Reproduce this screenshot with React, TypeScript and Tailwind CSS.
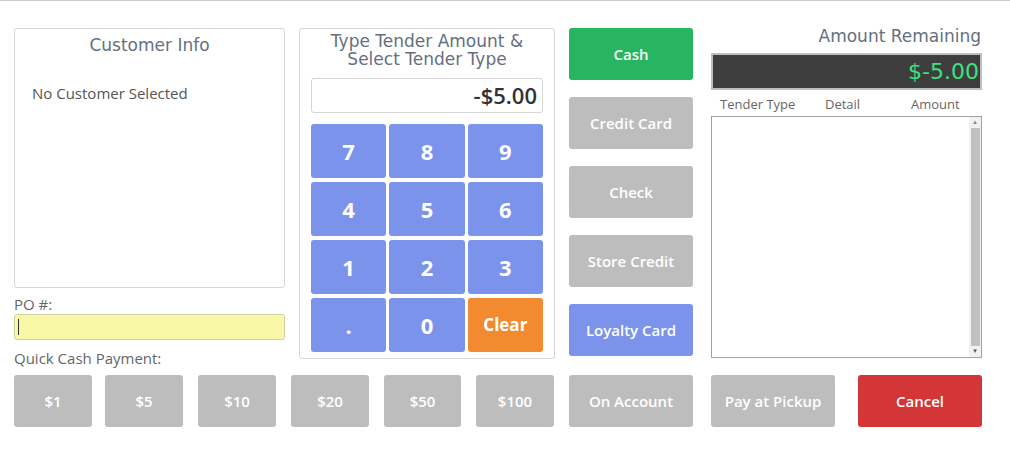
import React from 'react';

const title = { fontFamily: '"DejaVu Sans", "Noto Sans", sans-serif' };
const body = { fontFamily: '"Open Sans", "Noto Sans", sans-serif' };

const keys = ['7', '8', '9', '4', '5', '6', '1', '2', '3', '.', '0'];

const Btn: React.FC<{ label: string; className: string }> = ({ label, className }) => (
  <button
    className={`h-[52px] rounded-[3px] text-white font-semibold text-[15px] flex items-center justify-center ${className}`}
    style={body}
  >
    {label}
  </button>
);

export default function App() {
  return (
    <div className="w-[1010px] h-[452px] bg-white border-t border-[#c8c8c8] overflow-hidden" style={body}>
      <div className="flex items-start pt-[27px] pl-[14px]">
        {/* left column */}
        <div className="w-[271px] flex flex-col">
          <div className="h-[260px] border border-[#d6d6d6] rounded-[3px] flex flex-col">
            <div className="text-center text-[17px] text-[#647080] pt-[6px] leading-[20px]" style={title}>
              Customer Info
            </div>
            <div className="pl-[17px] pt-[28px] text-[15px] text-[#555] leading-[20px]">No Customer Selected</div>
          </div>
          <div className="pt-[6px] leading-[20px] text-[15px] text-[#666]">PO #:</div>
          <div className="h-[26px] bg-[#f9f8a9] border border-[#d2d2a0] rounded-[3px] flex items-center pl-[3px]">
            <div className="w-px h-[16px] bg-[#333]" />
          </div>
          <div className="pt-[8px] leading-[20px] text-[15px] text-[#666]">Quick Cash Payment:</div>
        </div>

        {/* tender amount panel */}
        <div className="w-[256px] h-[331px] ml-[14px] border border-[#d6d6d6] rounded-[3px] px-[11px] pt-[3px] flex flex-col">
          <div className="text-center text-[17px] leading-[18px] text-[#647080]" style={title}>
            <div>Type Tender Amount &amp;</div>
            <div>Select Tender Type</div>
          </div>
          <div className="mt-[10px] h-[35px] border border-[#d6d6d6] rounded-[3px] flex items-center justify-end pr-[5px] text-[22px] font-semibold text-[#333]">
            -$5.00
          </div>
          <div className="mt-[11px] grid grid-cols-3 gap-x-[3px] gap-y-[4px]">
            {keys.map((k) => (
              <button
                key={k}
                className="h-[54px] rounded-[3px] bg-[#7b93ea] text-white text-[22px] font-bold flex items-center justify-center"
              >
                {k}
              </button>
            ))}
            <button className="h-[54px] rounded-[3px] bg-[#f28a30] text-white text-[17px] font-bold flex items-center justify-center">
              Clear
            </button>
          </div>
        </div>

        {/* tender types */}
        <div className="w-[124px] ml-[14px] flex flex-col gap-[17px]">
          <Btn label="Cash" className="bg-[#27b561]" />
          <Btn label="Credit Card" className="bg-[#bdbdbd]" />
          <Btn label="Check" className="bg-[#bdbdbd]" />
          <Btn label="Store Credit" className="bg-[#bdbdbd]" />
          <Btn label="Loyalty Card" className="bg-[#7b93ea]" />
        </div>

        {/* amount remaining */}
        <div className="w-[271px] ml-[18px] flex flex-col">
          <div className="text-right text-[17px] leading-[16px] text-[#647080] pr-[1px]" style={title}>
            Amount Remaining
          </div>
          <div
            className="mt-[9px] h-[37px] bg-[#3e3e3e] border-2 border-[#bdbdbd] flex items-center justify-end pr-[1px] text-[22px] text-[#3fe07f]"
            style={title}
          >
            $-5.00
          </div>
          <div className="flex text-[13px] text-[#666] leading-[18px] mt-[5px] pl-[9px]">
            <span className="w-[105px]">Tender Type</span>
            <span className="w-[86px]">Detail</span>
            <span>Amount</span>
          </div>
          <div className="mt-[3px] h-[242px] border border-[#a0a0a0] flex justify-end">
            <div className="w-[12px] bg-[#f1f1f1] flex flex-col items-center">
              <div className="h-[11px] flex items-center justify-center text-[6px] text-[#888]">▲</div>
              <div className="flex-1 w-[9px] bg-[#c1c1c1]" />
              <div className="h-[11px] flex items-center justify-center text-[6px] text-[#555]">▼</div>
            </div>
          </div>
        </div>
      </div>

      {/* bottom buttons */}
      <div className="flex pl-[14px] mt-[7px]">
        <Btn label="$1" className="w-[78px] bg-[#bdbdbd]" />
        <Btn label="$5" className="w-[78px] ml-[13px] bg-[#bdbdbd]" />
        <Btn label="$10" className="w-[78px] ml-[15px] bg-[#bdbdbd]" />
        <Btn label="$20" className="w-[78px] ml-[15px] bg-[#bdbdbd]" />
        <Btn label="$50" className="w-[77px] ml-[15px] bg-[#bdbdbd]" />
        <Btn label="$100" className="w-[78px] ml-[15px] bg-[#bdbdbd]" />
        <Btn label="On Account" className="w-[124px] ml-[15px] bg-[#bdbdbd]" />
        <Btn label="Pay at Pickup" className="w-[124px] ml-[18px] bg-[#bdbdbd]" />
        <Btn label="Cancel" className="w-[124px] ml-[23px] bg-[#d43638]" />
      </div>
    </div>
  );
}
